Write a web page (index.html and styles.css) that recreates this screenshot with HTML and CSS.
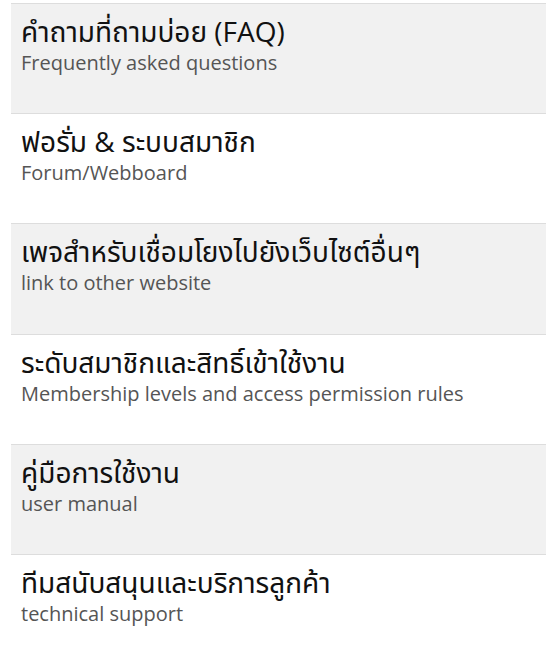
FILE: index.html
```html
<!DOCTYPE html>
<html lang="th">
<head>
<meta charset="utf-8">
<link rel="stylesheet" href="styles.css">
</head>
<body>
<ul class="menu">
  <li class="item alt">
    <div class="title">คำถามที่ถามบ่อย (FAQ)</div>
    <div class="sub">Frequently asked questions</div>
  </li>
  <li class="item">
    <div class="title">ฟอรั่ม &amp; ระบบสมาชิก</div>
    <div class="sub">Forum/Webboard</div>
  </li>
  <li class="item alt">
    <div class="title">เพจสำหรับเชื่อมโยงไปยังเว็บไซต์อื่นๆ</div>
    <div class="sub">link to other website</div>
  </li>
  <li class="item">
    <div class="title">ระดับสมาชิกและสิทธิ์เข้าใช้งาน</div>
    <div class="sub">Membership levels and access permission rules</div>
  </li>
  <li class="item alt">
    <div class="title">คู่มือการใช้งาน</div>
    <div class="sub">user manual</div>
  </li>
  <li class="item">
    <div class="title">ทีมสนับสนุนและบริการลูกค้า</div>
    <div class="sub">technical support</div>
  </li>
</ul>
</body>
</html>
```
FILE: styles.css
```css
html, body {
  margin: 0;
  padding: 0;
  background: #ffffff;
}
body {
  padding: 3px 0 0 11px;
  font-family: "Open Sans", "Noto Sans Thai", "Noto Sans", sans-serif;
}
.menu {
  list-style: none;
  margin: 0;
  padding: 0;
}
.item {
  box-sizing: border-box;
  height: 110.2px;
  border-top: 1px solid #dddddd;
  padding: 10px 10px 0 10px;
  background: #ffffff;
}
.item.alt {
  background: #f1f1f1;
}
.title {
  font-size: 28px;
  font-weight: 400;
  line-height: 34px;
  color: #111111;
}
.sub {
  margin-top: 1px;
  font-size: 20px;
  line-height: 28px;
  color: #555555;
}
```
